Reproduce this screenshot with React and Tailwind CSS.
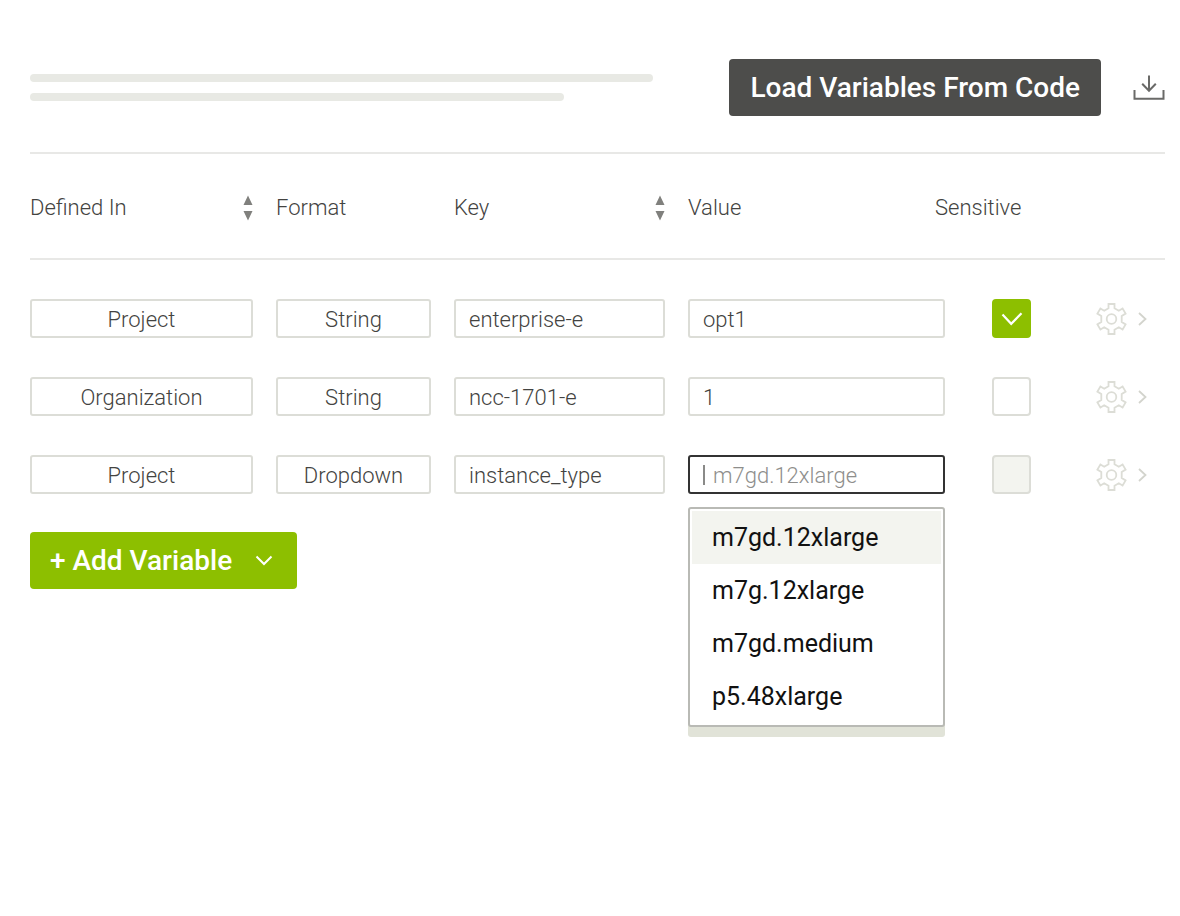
import { useState } from "react";

const initialVariables = [
  { id: 1, scope: "Project", format: "String", key: "enterprise-e", value: "opt1", sensitive: true },
  { id: 2, scope: "Organization", format: "String", key: "ncc-1701-e", value: "1", sensitive: false },
  { id: 3, scope: "Project", format: "Dropdown", key: "instance_type", value: "", sensitive: false },
];

const instanceTypes = ["m7gd.12xlarge", "m7g.12xlarge", "m7gd.medium", "p5.48xlarge"];

const fieldClass =
  "block h-[39px] w-full appearance-none rounded-[3px] border-2 border-[#dcddd7] bg-white pt-px text-[22px] font-light text-[#434341] outline-none";

const DownloadIcon = () => (
  <svg width="32" height="28" viewBox="0 0 32 28" fill="none" stroke="#6a6a68" strokeWidth="2">
    <path d="M1.5 16v8.7h29V16" />
    <path d="M16 1.5v15.5M9.2 9.8 16 16.8l6.8-7" />
  </svg>
);

const SortIcon = () => (
  <svg width="10" height="26" viewBox="0 0 10 26" fill="#80807d">
    <path d="M5 0.5 9.5 10h-9zM5 25.5 9.5 16h-9z" />
  </svg>
);

const GearIcon = () => (
  <svg width="31" height="32" viewBox="0 0 31 32" fill="none" stroke="#dcddd6" strokeWidth="1.8">
    <path d="M12.5 1h6v4.2l4.3 2.6 3.8-2.3 3 5.1-3.9 2.3v6.2l3.9 2.3-3 5.1-3.8-2.3-4.3 2.6V31h-6v-4.2l-4.3-2.6-3.8 2.3-3-5.1 3.9-2.3v-6.2l-3.9-2.3 3-5.1 3.8 2.3 4.3-2.6z" />
    <circle cx="15.5" cy="16" r="4.8" />
  </svg>
);

const ChevronRight = () => (
  <svg width="9" height="14" viewBox="0 0 9 14" fill="none" stroke="#d3d4cd" strokeWidth="1.8">
    <path d="m1 1 6.5 6L1 13" />
  </svg>
);

const ChevronDown = () => (
  <svg width="18" height="11" viewBox="0 0 18 11" fill="none" stroke="currentColor" strokeWidth="2">
    <path d="m1.5 1.5 7.5 7.5 7.5-7.5" />
  </svg>
);

const SelectField = ({ label, value, options, onChange }) => (
  <select
    aria-label={label}
    value={value}
    onChange={(e) => onChange(e.target.value)}
    className={`${fieldClass} text-center`}
  >
    {options.map((option) => (
      <option key={option}>{option}</option>
    ))}
  </select>
);

const SensitiveCheckbox = ({ checked, disabled, onChange }) => (
  <label className="relative block size-[39px]">
    <input
      type="checkbox"
      aria-label="Sensitive"
      checked={checked}
      disabled={disabled}
      onChange={(e) => onChange(e.target.checked)}
      className="block size-[39px] appearance-none rounded border-2 border-[#dcddd7] bg-white checked:border-[#8dbf00] checked:bg-[#8dbf00] disabled:bg-[#f3f4ef]"
    />
    {checked && (
      <svg
        className="pointer-events-none absolute inset-0"
        width="39"
        height="39"
        viewBox="0 0 39 39"
        fill="none"
        stroke="white"
        strokeWidth="2.2"
      >
        <path d="m10.5 15.5 8.7 9.3 10.3-10.6" />
      </svg>
    )}
  </label>
);

const ValueCombobox = ({ value, onChange }) => (
  <div className="relative">
    <div className="flex h-[39px] items-center rounded-[3px] border-2 border-[#333333] bg-white pl-[13px]">
      <span className="h-5 w-[2px] bg-[#8a8a88]" />
      <input
        type="text"
        role="combobox"
        aria-label="Value"
        aria-expanded="true"
        aria-controls="instance-types"
        placeholder="m7gd.12xlarge"
        value={value}
        onChange={(e) => onChange(e.target.value)}
        className="w-full min-w-0 bg-transparent pt-px pl-2 text-[22px] font-light text-[#434341] outline-none placeholder:text-[#8e8e8c]"
      />
    </div>
    <ul
      id="instance-types"
      role="listbox"
      aria-label="Instance types"
      className="absolute inset-x-0 top-full mt-[13px] rounded-[3px] border-2 border-[#b9bab5] bg-white p-[2px] shadow-[0_10px_0_0_#e1e3d8]"
    >
      {instanceTypes.map((type, index) => (
        <li
          key={type}
          role="option"
          aria-selected={index === 0}
          onClick={() => onChange(type)}
          className="flex h-[53px] cursor-pointer items-center pl-5 text-[25px] text-[#111111] aria-selected:bg-[#f3f4ef]"
        >
          {type}
        </li>
      ))}
    </ul>
  </div>
);

export default function App() {
  const [variables, setVariables] = useState(initialVariables);

  const update = (id, changes) =>
    setVariables(variables.map((item) => (item.id === id ? { ...item, ...changes } : item)));

  return (
    <main className="min-h-screen bg-white pt-[59px] pr-[15px] pl-[30px] font-['Roboto',sans-serif]">
      <header className="flex items-center border-b-2 border-[#e8e8e6] pb-9">
        <div className="mr-[76px] flex-1 space-y-[11px]">
          <div className="h-2 rounded-full bg-[#e8e9e4]" />
          <div className="h-2 w-6/7 rounded-full bg-[#e8e9e4]" />
        </div>
        <button
          type="button"
          className="h-[57px] rounded bg-[#4d4d4b] px-[21px] text-[28px] font-medium whitespace-nowrap text-white"
        >
          Load Variables From Code
        </button>
        <button type="button" aria-label="Download" className="ml-8">
          <DownloadIcon />
        </button>
      </header>

      <table className="w-full table-fixed border-separate border-spacing-0">
        {/* The value fields reach a little under the Sensitive heading, so that heading spans two columns */}
        <colgroup>
          <col className="w-[246px]" />
          <col className="w-[178px]" />
          <col className="w-[234px]" />
          <col />
          <col className="w-[10px]" />
          <col className="w-[151px]" />
          <col className="w-[69px]" />
        </colgroup>
        <thead>
          <tr className="h-[106px] text-left text-[22px] text-[#434341] [&>th]:border-b-2 [&>th]:border-[#e8e8e6] [&>th]:p-0 [&>th]:pt-[3px] [&>th]:font-light">
            <th scope="col">
              <div className="flex items-center justify-between pr-[23px]">
                Defined In
                <SortIcon />
              </div>
            </th>
            <th scope="col">Format</th>
            <th scope="col">
              <div className="flex items-center justify-between pr-[23px]">
                Key
                <SortIcon />
              </div>
            </th>
            <th scope="col">Value</th>
            <th scope="col" colSpan={2}>
              Sensitive
            </th>
            <th aria-label="Actions" />
          </tr>
        </thead>
        <tbody>
          {variables.map((item) => (
            <tr key={item.id} className="[&>td]:p-0 [&>td]:pt-[39px]">
              <td>
                <div className="pr-[23px]">
                  <SelectField
                    label="Defined In"
                    value={item.scope}
                    options={["Project", "Organization"]}
                    onChange={(scope) => update(item.id, { scope })}
                  />
                </div>
              </td>
              <td>
                <div className="pr-[23px]">
                  <SelectField
                    label="Format"
                    value={item.format}
                    options={["String", "Dropdown"]}
                    onChange={(format) => update(item.id, { format })}
                  />
                </div>
              </td>
              <td>
                <div className="pr-[23px]">
                  <input
                    type="text"
                    aria-label="Key"
                    value={item.key}
                    onChange={(e) => update(item.id, { key: e.target.value })}
                    className={`${fieldClass} pl-[13px]`}
                  />
                </div>
              </td>
              <td colSpan={2}>
                {item.format === "Dropdown" ? (
                  <ValueCombobox
                    value={item.value}
                    onChange={(value) => update(item.id, { value })}
                  />
                ) : (
                  <input
                    type="text"
                    aria-label="Value"
                    value={item.value}
                    onChange={(e) => update(item.id, { value: e.target.value })}
                    className={`${fieldClass} pl-[13px]`}
                  />
                )}
              </td>
              <td>
                <div className="pl-[47px]">
                  <SensitiveCheckbox
                    checked={item.sensitive}
                    disabled={item.format === "Dropdown"}
                    onChange={(sensitive) => update(item.id, { sensitive })}
                  />
                </div>
              </td>
              <td>
                <button
                  type="button"
                  aria-label={`Settings for ${item.key}`}
                  className="flex items-center gap-[11px]"
                >
                  <GearIcon />
                  <ChevronRight />
                </button>
              </td>
            </tr>
          ))}
        </tbody>
      </table>

      <button
        type="button"
        className="mt-[38px] flex h-[57px] items-center gap-[23px] rounded bg-[#8dbf00] pr-6 pl-5 text-[28px] font-medium text-white"
      >
        + Add Variable
        <ChevronDown />
      </button>
    </main>
  );
}
